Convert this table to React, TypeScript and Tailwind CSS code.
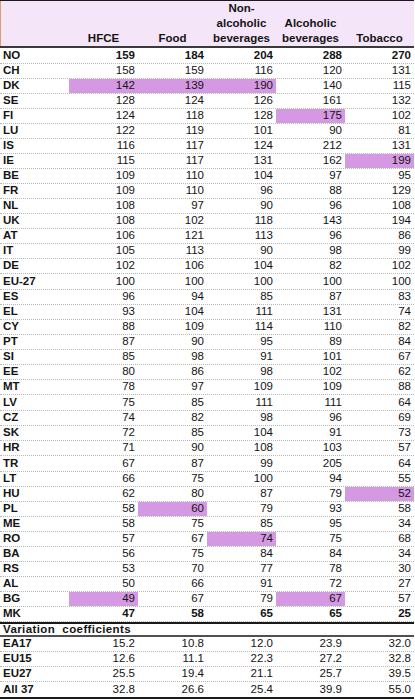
import React from "react";

type Row = { c: string; v: string[]; hi?: number[]; bold?: boolean; tall?: boolean };

const rows: Row[] = [
  { c: "NO", v: ["159", "184", "204", "288", "270"], bold: true, tall: true },
  { c: "CH", v: ["158", "159", "116", "120", "131"] },
  { c: "DK", v: ["142", "139", "190", "140", "115"], hi: [0, 1, 2] },
  { c: "SE", v: ["128", "124", "126", "161", "132"] },
  { c: "FI", v: ["124", "118", "128", "175", "102"], hi: [3] },
  { c: "LU", v: ["122", "119", "101", "90", "81"] },
  { c: "IS", v: ["116", "117", "124", "212", "131"] },
  { c: "IE", v: ["115", "117", "131", "162", "199"], hi: [4] },
  { c: "BE", v: ["109", "110", "104", "97", "95"] },
  { c: "FR", v: ["109", "110", "96", "88", "129"] },
  { c: "NL", v: ["108", "97", "90", "96", "108"] },
  { c: "UK", v: ["108", "102", "118", "143", "194"] },
  { c: "AT", v: ["106", "121", "113", "96", "86"] },
  { c: "IT", v: ["105", "113", "90", "98", "99"] },
  { c: "DE", v: ["102", "106", "104", "82", "102"] },
  { c: "EU-27", v: ["100", "100", "100", "100", "100"], tall: true },
  { c: "ES", v: ["96", "94", "85", "87", "83"] },
  { c: "EL", v: ["93", "104", "111", "131", "74"] },
  { c: "CY", v: ["88", "109", "114", "110", "82"] },
  { c: "PT", v: ["87", "90", "95", "89", "84"] },
  { c: "SI", v: ["85", "98", "91", "101", "67"] },
  { c: "EE", v: ["80", "86", "98", "102", "62"] },
  { c: "MT", v: ["78", "97", "109", "109", "88"] },
  { c: "LV", v: ["75", "85", "111", "111", "64"], tall: true },
  { c: "CZ", v: ["74", "82", "98", "96", "69"] },
  { c: "SK", v: ["72", "85", "104", "91", "73"] },
  { c: "HR", v: ["71", "90", "108", "103", "57"] },
  { c: "TR", v: ["67", "87", "99", "205", "64"], tall: true },
  { c: "LT", v: ["66", "75", "100", "94", "55"] },
  { c: "HU", v: ["62", "80", "87", "79", "52"], hi: [4] },
  { c: "PL", v: ["58", "60", "79", "93", "58"], hi: [1] },
  { c: "ME", v: ["58", "75", "85", "95", "34"] },
  { c: "RO", v: ["57", "67", "74", "75", "68"], hi: [2] },
  { c: "BA", v: ["56", "75", "84", "84", "34"] },
  { c: "RS", v: ["53", "70", "77", "78", "30"] },
  { c: "AL", v: ["50", "66", "91", "72", "27"] },
  { c: "BG", v: ["49", "67", "79", "67", "57"], hi: [0, 3] },
  { c: "MK", v: ["47", "58", "65", "65", "25"], bold: true },
];

const coeffs: Row[] = [
  { c: "EA17", v: ["15.2", "10.8", "12.0", "23.9", "32.0"] },
  { c: "EU15", v: ["12.6", "11.1", "22.3", "27.2", "32.8"] },
  { c: "EU27", v: ["25.5", "19.4", "21.1", "25.7", "39.5"] },
];

const grid = "grid grid-cols-[69px_69px_69px_69px_69px_69px]";

const DataRow = ({ r, last }: { r: Row; last?: boolean }) => (
  <div
    className={`${grid} ${r.tall ? "h-[16px]" : "h-[15px]"} ${
      last ? "h-[14px]" : "border-b border-dotted border-[#b8b8b8]"
    }`}
  >
    <div className="pl-[3px] font-bold flex items-center">{r.c}</div>
    {r.v.map((x, i) => (
      <div
        key={i}
        className={`flex items-center justify-end pr-[3px] ${
          r.hi?.includes(i) ? "bg-[#d598e2]" : ""
        } ${r.bold ? "font-bold" : ""}`}
      >
        {x}
      </div>
    ))}
  </div>
);

export default function App() {
  return (
    <div className="w-[415px] h-[700px] bg-white text-[#141414] text-[11.5px] leading-none font-['Liberation_Sans',Arial,sans-serif]">
      <div className="w-[414px]">
        <div
          className={`${grid} h-[48px] border-t border-t-[#1a1a1a] border-b-2 border-b-[#3a3a3a] bg-[#f5e5f8] font-bold leading-[15px] text-center`}
        >
          <div className="border-l border-l-[#dba06a]" />
          <div className="flex items-end justify-center">HFCE</div>
          <div className="flex items-end justify-center">Food</div>
          <div className="flex items-end justify-center">
            Non-
            <br />
            alcoholic
            <br />
            beverages
          </div>
          <div className="flex items-end justify-center">
            Alcoholic
            <br />
            beverages
          </div>
          <div className="flex items-end justify-center">Tobacco</div>
        </div>

        {rows.map((r) => (
          <DataRow key={r.c} r={r} />
        ))}

        <div className="border-t-2 border-t-[#1a1a1a] h-[15px] border-b-2 border-b-[#505050] flex items-center pl-[3px] font-bold tracking-[0.4px]">
          Variation&nbsp; coefficients
        </div>

        {coeffs.map((r) => (
          <DataRow key={r.c} r={r} />
        ))}
        <div className="border-b-2 border-b-[#1a1a1a]">
          <DataRow r={{ c: "All 37", v: ["32.8", "26.6", "25.4", "39.9", "55.0"] }} last />
        </div>
      </div>
    </div>
  );
}
